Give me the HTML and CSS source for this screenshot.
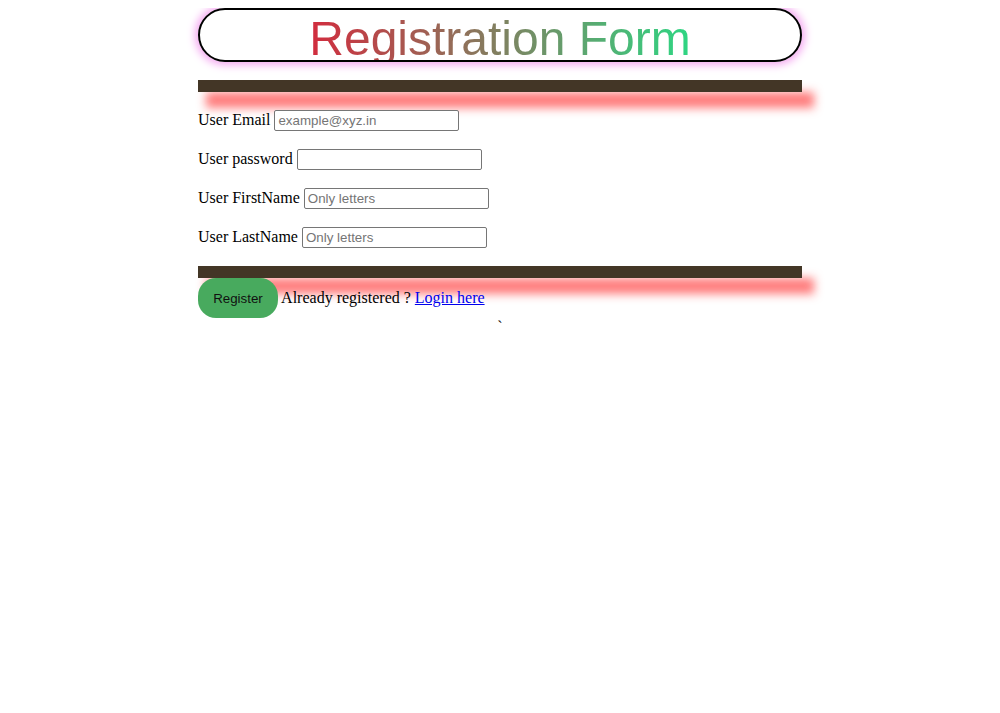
FILE: index.html
```html
<!DOCTYPE html>
<html>
<head>
<meta charset="utf-8">
<title>Registration Form</title>
<link rel="stylesheet" href="styles.css">
</head>
<body>
<div class="wrap">
  <div class="title"><span class="title-text">Registration Form</span></div>
  <hr class="bar bar-top">
  <form class="form">
    <p class="row">User Email <input class="field" type="email" placeholder="example@xyz.in"></p>
    <p class="row">User password <input class="field" type="password"></p>
    <p class="row">User FirstName <input class="field" type="text" placeholder="Only letters"></p>
    <p class="row">User LastName <input class="field" type="text" placeholder="Only letters"></p>
    <hr class="bar bar-bottom">
    <div class="actions"><button class="register" type="button">Register</button> Already registered ? <a class="login" href="#">Login here</a></div>
  </form>
  <div class="tick">`</div>
</div>
</body>
</html>
```
FILE: styles.css
```css
html, body {
  background: #ffffff;
}
body {
  margin: 8px;
  font-family: "Liberation Serif", "Times New Roman", serif;
  font-size: 16px;
  color: #000;
}
.wrap {
  width: 604px;
  margin: 0 auto;
}
.title {
  box-sizing: border-box;
  height: 54px;
  border: 2px solid #000;
  border-radius: 27px;
  box-shadow: 0 0 8px 3px #f4a6f0;
  text-align: center;
  overflow: hidden;
}
.title-text {
  display: inline-block;
  font-family: "Liberation Sans", Arial, sans-serif;
  font-size: 48px;
  line-height: 57px;
  background: linear-gradient(to right, #d22c3e, #2ed683);
  -webkit-background-clip: text;
  background-clip: text;
  color: transparent;
}
.bar {
  height: 12px;
  border: 0;
  background: #433626;
  margin: 0;
  box-shadow: 10px 14px 10px 2px rgba(255, 45, 45, 0.62);
}
.bar-top {
  margin-top: 18px;
}
.form {
  margin: 0;
}
.row {
  margin: 16px 0;
  line-height: 23px;
}
.field {
  box-sizing: border-box;
  width: 185px;
  height: 21px;
  border: 1px solid #767676;
  border-radius: 2px;
  padding: 1px 3px;
  font-family: "Liberation Sans", Arial, sans-serif;
  font-size: 13.33px;
  vertical-align: baseline;
}
.field::placeholder {
  color: #757575;
}
.bar-bottom {
  margin-top: 18px;
}
.actions {
  line-height: 40px;
}
.register {
  width: 80px;
  height: 40px;
  border: 0;
  border-radius: 18px;
  background: #48aa5e;
  color: #111;
  font-family: "Liberation Sans", Arial, sans-serif;
  font-size: 13.33px;
  padding: 0;
  vertical-align: top;
}
.login {
  color: #0000ee;
}
.tick {
  text-align: center;
  line-height: 18px;
  height: 18px;
}
```
